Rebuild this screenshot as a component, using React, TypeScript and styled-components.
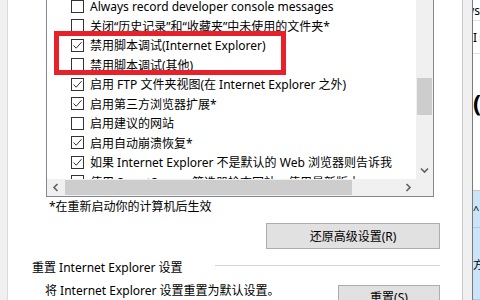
import styled, { createGlobalStyle } from 'styled-components';

const GlobalStyle = createGlobalStyle`
  html, body {
    margin: 0;
    padding: 0;
    background: #fff;
  }
  body {
    width: 480px;
    height: 300px;
    overflow: hidden;
    font-family: "Noto Sans", "Noto Sans CJK SC", sans-serif;
    font-size: 12px;
    color: #000;
  }
`;

const Screen = styled.div`
  display: flex;
  width: 480px;
  height: 300px;
  overflow: hidden;
`;

const EdgeStrip = styled.div`
  flex: none;
  width: 7px;
  background: #f0f0f0;
  border-right: 1px solid #dadada;
`;

const Page = styled.div`
  flex: none;
  width: 454px;
  display: flex;
  flex-direction: column;
  background: #fff;
`;

const ListBox = styled.div`
  margin-left: 38px;
  width: 388px;
  height: 197px;
  box-sizing: border-box;
  border: 1px solid #828790;
  border-top: none;
  display: grid;
  grid-template-columns: 1fr 17px;
  grid-template-rows: 179px 17px;
`;

const Rows = styled.div`
  position: relative;
  overflow: hidden;
`;

const RowStack = styled.div`
  margin-top: -3.75px;
`;

const Row = styled.div`
  height: 19.5px;
  display: flex;
  align-items: center;
  gap: 6px;
  padding-left: 24px;
  white-space: nowrap;
`;

const Box = styled.span<{ $checked?: boolean }>`
  flex: none;
  width: 13px;
  height: 13px;
  box-sizing: border-box;
  border: 1px solid #333;
  background: #fff;
  display: flex;
  align-items: center;
  justify-content: center;
`;

const Highlight = styled.div`
  position: absolute;
  left: 7px;
  top: 31px;
  width: 232px;
  height: 44px;
  box-sizing: border-box;
  border: 5px solid #e8202a;
`;

const VScroll = styled.div`
  background: #f0f0f0;
  display: flex;
  flex-direction: column;
  align-items: center;
`;

const VThumb = styled.div`
  margin-top: 78px;
  width: 15px;
  height: 37px;
  background: #cdcdcd;
`;

const Arrow = styled.div`
  width: 17px;
  height: 17px;
  display: flex;
  align-items: center;
  justify-content: center;
  flex: none;
`;

const VDown = styled(Arrow)`
  margin-top: auto;
`;

const HScroll = styled.div`
  background: #f0f0f0;
  display: flex;
  align-items: center;
`;

const HThumb = styled.div`
  width: 287px;
  height: 15px;
  margin-left: 1px;
  background: #cdcdcd;
`;

const HRight = styled(Arrow)`
  margin-left: auto;
`;

const Corner = styled.div`
  background: #f0f0f0;
`;

const Note = styled.div`
  margin: 2px 0 0 41px;
  line-height: 16px;
`;

const ButtonRow = styled.div`
  display: flex;
  justify-content: flex-end;
  padding-right: 22px;
  margin-top: 8px;
`;

const Button = styled.button<{ $w: number }>`
  width: ${(p) => p.$w}px;
  height: 26px;
  box-sizing: border-box;
  border: 1px solid #adadad;
  background: #e1e1e1;
  font: inherit;
  color: #000;
  padding: 0;
  flex: none;
`;

const GroupHeader = styled.div`
  display: flex;
  align-items: flex-start;
  height: 16px;
  margin-top: 11px;
  padding: 0 22px 0 24px;
  line-height: 16px;
`;

const GroupRule = styled.div`
  flex: 1;
  height: 1px;
  margin: 5px 0 0 32px;
  background: #d5d5d5;
`;

const ResetRow = styled.div`
  display: flex;
  align-items: flex-start;
  margin-top: 7px;
  padding: 0 22px 0 37px;
  line-height: 16px;
`;

const ResetButton = styled(Button)`
  margin: 2px 0 0 auto;
`;

const Splitter = styled.div`
  flex: none;
  width: 9px;
  background: #f0f0f0;
  border-left: 1px solid #c8c8c8;
  border-right: 1px solid #7a7a7a;
`;

const Browser = styled.div`
  flex: 1;
  min-width: 0;
  overflow: hidden;
  display: flex;
  flex-direction: column;
  background: #fff;
`;

const PaneRow = styled.div<{ $h: number; $line?: boolean }>`
  height: ${(p) => p.$h}px;
  flex: none;
  display: flex;
  align-items: center;
  overflow: hidden;
  white-space: nowrap;
  border-bottom: ${(p) => (p.$line ? '1px solid #e3e3e3' : 'none')};
`;

const TailText = styled(PaneRow)`
  justify-content: flex-end;
`;

const Caret = styled.span`
  color: #000;
`;

const Hint = styled.span`
  color: #888;
  margin-left: 2px;
`;

const Heading = styled.div`
  height: 137px;
  flex: none;
  padding-top: 34px;
  box-sizing: border-box;
  font-size: 24px;
  font-weight: 700;
  line-height: 30px;
  white-space: nowrap;
  border-bottom: 1px solid #c8c8c8;
`;

const BlueRow = styled.div<{ $h: number }>`
  height: ${(p) => p.$h}px;
  flex: none;
  background: #cce4f7;
  display: flex;
  align-items: center;
  white-space: nowrap;
  font-size: 11px;
  border-bottom: 1px solid #a9cdf0;
`;

const Chevron = ({ dir }: { dir: 'left' | 'right' | 'down' }) => {
  const d =
    dir === 'down' ? 'M1 1.5 L4.5 5 L8 1.5' : dir === 'left' ? 'M5.5 1 L2 4.5 L5.5 8' : 'M2.5 1 L6 4.5 L2.5 8';
  const w = dir === 'down' ? 9 : 8;
  const h = dir === 'down' ? 7 : 9;
  return (
    <svg width={w} height={h} viewBox={`0 0 ${w} ${h}`}>
      <path d={d} fill="none" stroke="#606060" strokeWidth="1.6" />
    </svg>
  );
};

const Check = () => (
  <svg width="11" height="11" viewBox="0 0 11 11">
    <path d="M1.5 5.5 L4.2 8.2 L9.5 2.2" fill="none" stroke="#333" strokeWidth="1" />
  </svg>
);

const items: { label: string; checked: boolean }[] = [
  { label: 'Always record developer console messages', checked: false },
  { label: '关闭“历史记录”和“收藏夹”中未使用的文件夹*', checked: false },
  { label: '禁用脚本调试(Internet Explorer)', checked: true },
  { label: '禁用脚本调试(其他)', checked: false },
  { label: '启用 FTP 文件夹视图(在 Internet Explorer 之外)', checked: true },
  { label: '启用第三方浏览器扩展*', checked: true },
  { label: '启用建议的网站', checked: false },
  { label: '启用自动崩溃恢复*', checked: true },
  { label: '如果 Internet Explorer 不是默认的 Web 浏览器则告诉我', checked: true },
  { label: '使用 SmartScreen 筛选器检查网站，使用最新版本', checked: false },
];

function App() {
  return (
    <>
      <GlobalStyle />
      <Screen>
        <EdgeStrip />
        <Page>
          <ListBox>
            <Rows>
              <RowStack>
                {items.map((item) => (
                  <Row key={item.label}>
                    <Box $checked={item.checked}>{item.checked && <Check />}</Box>
                    <span>{item.label}</span>
                  </Row>
                ))}
              </RowStack>
              <Highlight />
            </Rows>
            <VScroll>
              <VThumb />
              <VDown>
                <Chevron dir="down" />
              </VDown>
            </VScroll>
            <HScroll>
              <Arrow>
                <Chevron dir="left" />
              </Arrow>
              <HThumb />
              <HRight>
                <Chevron dir="right" />
              </HRight>
            </HScroll>
            <Corner />
          </ListBox>
          <Note>*在重新启动你的计算机后生效</Note>
          <ButtonRow>
            <Button $w={174}>还原高级设置(R)</Button>
          </ButtonRow>
          <GroupHeader>
            <span>重置 Internet Explorer 设置</span>
            <GroupRule />
          </GroupHeader>
          <ResetRow>
            <span>将 Internet Explorer 设置重置为默认设置。</span>
            <ResetButton $w={102}>重置(S)</ResetButton>
          </ResetRow>
        </Page>
        <Splitter />
        <Browser>
          <TailText $h={20} $line>
            Windows
          </TailText>
          <PaneRow $h={32} $line>
            <Caret>I</Caret>
            <Hint>r</Hint>
          </PaneRow>
          <Heading>(仔</Heading>
          <BlueRow $h={36}>^</BlueRow>
          <BlueRow $h={71}>方</BlueRow>
        </Browser>
      </Screen>
    </>
  );
}

export default App;
